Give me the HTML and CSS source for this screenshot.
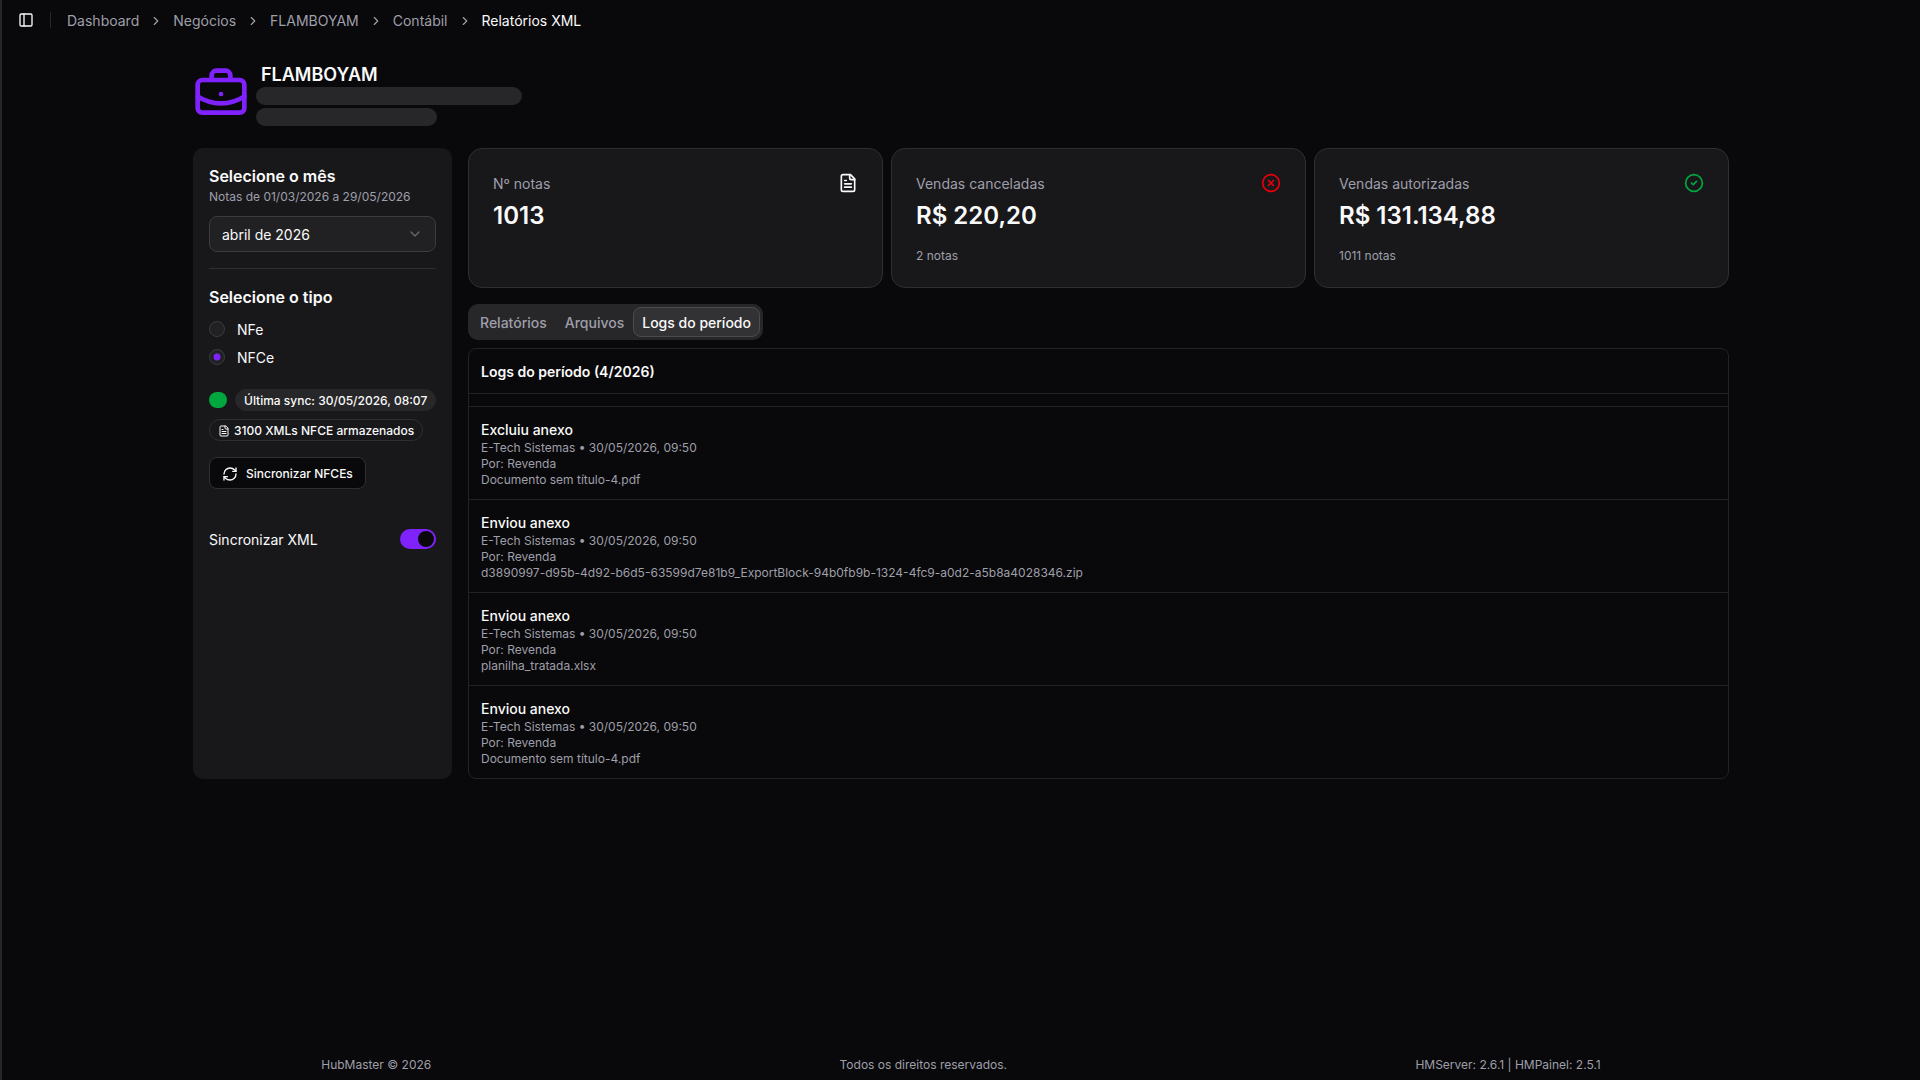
FILE: index.html
```html
<!DOCTYPE html>
<html lang="pt-BR">
<head>
    <meta charset="UTF-8">
    <meta name="viewport" content="width=device-width, initial-scale=1.0">
    <title>Relatórios XML</title>
    <link rel="stylesheet" href="styles.css">
</head>
<body>
    <!-- shared icons -->
    <svg class="sprite" aria-hidden="true">
        <symbol id="chevron-right" viewBox="0 0 24 24"><path d="m9 18 6-6-6-6"/></symbol>
        <symbol id="file-text" viewBox="0 0 24 24">
            <path d="M15 2H6a2 2 0 0 0-2 2v16a2 2 0 0 0 2 2h12a2 2 0 0 0 2-2V7Z"/>
            <path d="M14 2v4a2 2 0 0 0 2 2h4"/>
            <path d="M10 9H8"/><path d="M16 13H8"/><path d="M16 17H8"/>
        </symbol>
    </svg>

    <header class="topbar">
        <button class="sidebar-toggle" type="button" aria-label="Alternar menu">
            <svg class="icon icon-16" viewBox="0 0 24 24"><rect width="18" height="18" x="3" y="3" rx="2"/><path d="M9 3v18"/></svg>
        </button>
        <span class="divider"></span>
        <nav class="breadcrumb">
            <a href="#">Dashboard</a>
            <svg class="icon icon-14"><use href="#chevron-right"/></svg>
            <a href="#">Negócios</a>
            <svg class="icon icon-14"><use href="#chevron-right"/></svg>
            <a href="#">FLAMBOYAM</a>
            <svg class="icon icon-14"><use href="#chevron-right"/></svg>
            <a href="#">Contábil</a>
            <svg class="icon icon-14"><use href="#chevron-right"/></svg>
            <span class="current">Relatórios XML</span>
        </nav>
    </header>

    <main class="container">
        <div class="business">
            <svg class="icon business-icon" viewBox="0 0 24 24">
                <path d="M12 12h.01"/>
                <path d="M16 6V4a2 2 0 0 0-2-2h-4a2 2 0 0 0-2 2v2"/>
                <path d="M22 13a18.15 18.15 0 0 1-20 0"/>
                <rect width="20" height="14" x="2" y="6" rx="2"/>
            </svg>
            <div class="business-info">
                <h1>FLAMBOYAM</h1>
                <div class="skeleton skeleton-long"></div>
                <div class="skeleton skeleton-short"></div>
            </div>
        </div>

        <div class="layout">
            <aside class="filters">
                <h2><label for="mes">Selecione o mês</label></h2>
                <p class="hint">Notas de 01/03/2026 a 29/05/2026</p>
                <div class="select">
                    <select id="mes">
                        <option>abril de 2026</option>
                    </select>
                    <svg class="icon icon-16" viewBox="0 0 24 24"><path d="m6 9 6 6 6-6"/></svg>
                </div>
                <hr>
                <h2>Selecione o tipo</h2>
                <div class="radios">
                    <label><input type="radio" name="tipo"> <span>NFe</span></label>
                    <label><input type="radio" name="tipo" checked> <span>NFCe</span></label>
                </div>
                <div class="sync">
                    <div class="sync-row">
                        <span class="dot"></span>
                        <span class="badge badge-filled">Última sync: 30/05/2026, 08:07</span>
                    </div>
                    <span class="badge">
                        <svg class="icon icon-12"><use href="#file-text"/></svg>
                        3100 XMLs NFCE armazenados
                    </span>
                </div>
                <button class="btn" type="button">
                    <svg class="icon icon-16" viewBox="0 0 24 24">
                        <path d="M3 12a9 9 0 0 1 9-9 9.75 9.75 0 0 1 6.74 2.74L21 8"/>
                        <path d="M21 3v5h-5"/>
                        <path d="M21 12a9 9 0 0 1-9 9 9.75 9.75 0 0 1-6.74-2.74L3 16"/>
                        <path d="M8 16H3v5"/>
                    </svg>
                    Sincronizar NFCEs
                </button>
                <div class="switch-row">
                    <label for="sync-xml">Sincronizar XML</label>
                    <input class="switch" type="checkbox" role="switch" id="sync-xml" checked>
                </div>
            </aside>

            <section class="content">
                <div class="cards">
                    <div class="card">
                        <div>
                            <p class="card-label">Nº notas</p>
                            <p class="card-value">1013</p>
                        </div>
                        <svg class="icon icon-20"><use href="#file-text"/></svg>
                    </div>
                    <div class="card">
                        <div>
                            <p class="card-label">Vendas canceladas</p>
                            <p class="card-value">R$ 220,20</p>
                            <p class="card-note">2 notas</p>
                        </div>
                        <svg class="icon icon-20 red" viewBox="0 0 24 24"><circle cx="12" cy="12" r="10"/><path d="m15 9-6 6"/><path d="m9 9 6 6"/></svg>
                    </div>
                    <div class="card">
                        <div>
                            <p class="card-label">Vendas autorizadas</p>
                            <p class="card-value">R$ 131.134,88</p>
                            <p class="card-note">1011 notas</p>
                        </div>
                        <svg class="icon icon-20 green" viewBox="0 0 24 24"><circle cx="12" cy="12" r="10"/><path d="m9 12 2 2 4-4"/></svg>
                    </div>
                </div>

                <div class="tabs" role="tablist">
                    <button type="button" role="tab">Relatórios</button>
                    <button type="button" role="tab">Arquivos</button>
                    <button type="button" role="tab" class="active" aria-selected="true">Logs do período</button>
                </div>

                <div class="logs">
                    <h3>Logs do período (4/2026)</h3>
                    <ul>
                        <li>
                            <h4>Excluiu anexo</h4>
                            <p>E-Tech Sistemas • 30/05/2026, 09:50</p>
                            <p>Por: Revenda</p>
                            <p>Documento sem título-4.pdf</p>
                        </li>
                        <li>
                            <h4>Enviou anexo</h4>
                            <p>E-Tech Sistemas • 30/05/2026, 09:50</p>
                            <p>Por: Revenda</p>
                            <p>d3890997-d95b-4d92-b6d5-63599d7e81b9_ExportBlock-94b0fb9b-1324-4fc9-a0d2-a5b8a4028346.zip</p>
                        </li>
                        <li>
                            <h4>Enviou anexo</h4>
                            <p>E-Tech Sistemas • 30/05/2026, 09:50</p>
                            <p>Por: Revenda</p>
                            <p>planilha_tratada.xlsx</p>
                        </li>
                        <li>
                            <h4>Enviou anexo</h4>
                            <p>E-Tech Sistemas • 30/05/2026, 09:50</p>
                            <p>Por: Revenda</p>
                            <p>Documento sem título-4.pdf</p>
                        </li>
                    </ul>
                </div>
            </section>
        </div>
    </main>

    <footer class="footer">
        <span>HubMaster © 2026</span>
        <span>Todos os direitos reservados.</span>
        <span>HMServer: 2.6.1 | HMPainel: 2.5.1</span>
    </footer>
</body>
</html>
```
FILE: styles.css
```css
* {
    box-sizing: border-box;
    margin: 0;
    padding: 0;
}
body {
    min-height: 100vh;
    display: flex;
    flex-direction: column;
    background-color: #09090b;
    border-left: 2px solid #27272a;
    color: #fafafa;
    font-family: Inter, "Liberation Sans", sans-serif;
    font-size: 14px;
    line-height: 20px;
}
button, select, input {
    font: inherit;
    color: inherit;
}
button {
    cursor: pointer;
}
a {
    color: inherit;
    text-decoration: none;
}

/* icons */
.sprite {
    display: none;
}
.icon {
    flex-shrink: 0;
    fill: none;
    stroke: currentColor;
    stroke-width: 2;
    stroke-linecap: round;
    stroke-linejoin: round;
}
.icon-12 {
    width: 12px;
    height: 12px;
}
.icon-14 {
    width: 14px;
    height: 14px;
}
.icon-16 {
    width: 16px;
    height: 16px;
}
.icon-20 {
    width: 20px;
    height: 20px;
}
.red {
    color: #e7000b;
}
.green {
    color: #00a63e;
}

/* top bar */
.topbar {
    display: flex;
    align-items: center;
    height: 40px;
    padding: 0 10px;
}
.sidebar-toggle {
    display: flex;
    align-items: center;
    justify-content: center;
    width: 28px;
    height: 28px;
    background: none;
    border: none;
}
.divider {
    width: 1px;
    height: 16px;
    margin: 0 16px 0 10px;
    background-color: #27272a;
}
.breadcrumb {
    display: flex;
    align-items: center;
    gap: 10px;
    padding-top: 1px;
    color: #9f9fa9;
}
.current {
    color: #fafafa;
}

.container {
    width: 100%;
    max-width: 1536px;
    margin: 0 auto;
    padding-top: 24px;
}

/* business header */
.business {
    display: flex;
    gap: 7px;
    padding-bottom: 22px;
}
.business-icon {
    width: 56px;
    height: 56px;
    margin-top: 2px;
    color: #7f22fe;
}
.business-info {
    display: flex;
    flex-direction: column;
    gap: 3px;
}
.business h1 {
    padding: 1px 0 0 5px;
    font-size: 18px;
    line-height: 19px;
    font-weight: 600;
}
.skeleton {
    height: 18px;
    border-radius: 9px;
    background-color: #27272a;
}
.skeleton-long {
    width: 266px;
}
.skeleton-short {
    width: 181px;
}

.layout {
    display: flex;
    gap: 16px;
}

/* filters */
.filters {
    display: flex;
    flex-direction: column;
    align-items: flex-start;
    width: 259px;
    flex-shrink: 0;
    padding: 16px;
    background-color: #18181b;
    border-radius: 10px;
}
.filters h2 {
    font-size: 16px;
    line-height: 24px;
    font-weight: 600;
}
.hint {
    padding-top: 1px;
    font-size: 12px;
    line-height: 16px;
    color: #9f9fa9;
}
.select {
    display: grid;
    align-items: center;
    width: 100%;
    margin-top: 11px;
}
.select select {
    grid-area: 1 / 1;
    appearance: none;
    width: 100%;
    height: 36px;
    padding: 2px 36px 0 12px;
    background-color: #212124;
    border: 1px solid #3c3c40;
    border-radius: 8px;
}
.select .icon {
    grid-area: 1 / 1;
    justify-self: end;
    margin-right: 13px;
    color: #66666d;
    pointer-events: none;
}
.filters hr {
    width: 100%;
    margin: 16px 0;
    border: none;
    border-top: 1px solid #2f2f32;
}
.radios {
    display: flex;
    flex-direction: column;
    gap: 8px;
    margin-top: 10px;
}
.radios label {
    display: flex;
    align-items: center;
    gap: 12px;
    height: 20px;
}
.radios span {
    padding-top: 2px;
}
.radios input {
    appearance: none;
    width: 16px;
    height: 16px;
    border: 1px solid #3c3c40;
    border-radius: 50%;
    background-color: #212124;
}
.radios input:checked {
    background-image: radial-gradient(circle, #7f22fe 3px, transparent 4px);
}
.sync {
    display: flex;
    flex-direction: column;
    align-items: flex-start;
    gap: 8px;
    margin: 22px 0 16px;
}
.sync-row {
    display: flex;
    align-items: center;
    gap: 8px;
}
.dot {
    width: 18px;
    height: 16px;
    border-radius: 8px;
    background-color: #00a63e;
}
.badge {
    display: flex;
    align-items: center;
    gap: 4px;
    padding: 3px 8px 1px;
    border: 1px solid #2f2f32;
    border-radius: 11px;
    font-size: 12px;
    line-height: 16px;
    font-weight: 500;
    white-space: nowrap;
}
.badge-filled {
    border-color: #27272a;
    background-color: #27272a;
}
.btn {
    display: flex;
    align-items: center;
    gap: 8px;
    height: 32px;
    padding: 1px 12px 0;
    background-color: #09090b;
    border: 1px solid #2f2f32;
    border-radius: 8px;
    font-size: 12px;
    font-weight: 500;
}
.switch-row {
    display: flex;
    align-items: flex-start;
    justify-content: space-between;
    width: 100%;
    margin-top: 40px;
}
.switch-row label {
    padding-top: 1px;
}
.switch {
    appearance: none;
    width: 36px;
    height: 20px;
    padding: 2px;
    border-radius: 10px;
    background-color: #3c3c40;
    cursor: pointer;
}
.switch::before {
    content: "";
    display: block;
    width: 16px;
    height: 16px;
    border-radius: 50%;
    background-color: #09090b;
}
.switch:checked {
    background-color: #7f22fe;
}
.switch:checked::before {
    margin-left: auto;
}

/* content */
.content {
    flex: 1;
    min-width: 0;
}
.cards {
    display: grid;
    grid-template-columns: repeat(3, 1fr);
    gap: 8px;
}
.card {
    display: flex;
    align-items: flex-start;
    justify-content: space-between;
    min-height: 140px;
    padding: 24px 24px 20px;
    background-color: #18181b;
    border: 1px solid #2f2f32;
    border-radius: 14px;
}
.card-label {
    padding-top: 1px;
    color: #9f9fa9;
}
.card-value {
    margin-top: 6px;
    font-size: 24px;
    line-height: 32px;
    font-weight: 600;
}
.card-note {
    margin-top: 16px;
    font-size: 12px;
    line-height: 16px;
    color: #9f9fa9;
}

.tabs {
    display: inline-flex;
    height: 36px;
    margin: 16px 0 8px;
    padding: 3px;
    background-color: #27272a;
    border-radius: 10px;
    vertical-align: top;
}
.tabs button {
    padding: 2px 8px 0;
    background: none;
    border: 1px solid transparent;
    border-radius: 8px;
    font-weight: 500;
    color: #9f9fa9;
}
.tabs .active {
    background-color: #323235;
    border-color: #4b4b4e;
    color: #fafafa;
}

.logs {
    border: 1px solid #222225;
    border-radius: 8px;
}
.logs h3 {
    padding: 13px 12px 11px;
    border-bottom: 1px solid #222225;
    font-size: 14px;
    font-weight: 600;
}
.logs ul {
    padding-top: 12px;
    list-style: none;
}
.logs li {
    padding: 13px 12px 11px;
    border-top: 1px solid #222225;
}
.logs h4 {
    font-size: 14px;
    font-weight: 500;
}
.logs p {
    font-size: 12px;
    line-height: 16px;
    color: #9f9fa9;
}

.footer {
    display: flex;
    justify-content: space-around;
    width: 88%;
    margin: auto auto 0;
    padding-bottom: 7px;
    font-size: 12px;
    line-height: 16px;
    color: #9f9fa9;
}
```
